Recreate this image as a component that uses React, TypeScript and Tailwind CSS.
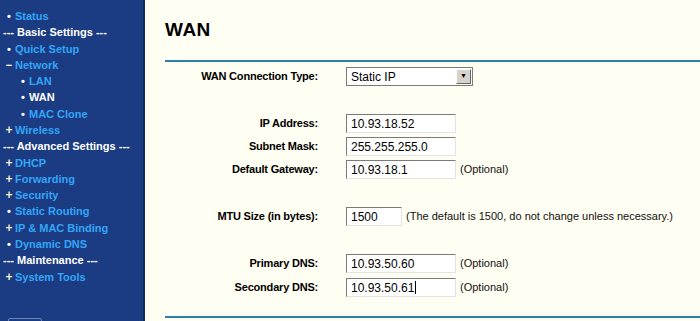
const menu: { text: string; kind: "head" | "item"; mark?: string; level?: number; active?: boolean }[] = [
  { text: "Status", kind: "item", mark: "•" },
  { text: "--- Basic Settings ---", kind: "head" },
  { text: "Quick Setup", kind: "item", mark: "•" },
  { text: "Network", kind: "item", mark: "−" },
  { text: "LAN", kind: "item", mark: "•", level: 1 },
  { text: "WAN", kind: "item", mark: "•", level: 1, active: true },
  { text: "MAC Clone", kind: "item", mark: "•", level: 1 },
  { text: "Wireless", kind: "item", mark: "+" },
  { text: "--- Advanced Settings ---", kind: "head" },
  { text: "DHCP", kind: "item", mark: "+" },
  { text: "Forwarding", kind: "item", mark: "+" },
  { text: "Security", kind: "item", mark: "+" },
  { text: "Static Routing", kind: "item", mark: "•" },
  { text: "IP & MAC Binding", kind: "item", mark: "+" },
  { text: "Dynamic DNS", kind: "item", mark: "•" },
  { text: "--- Maintenance ---", kind: "head" },
  { text: "System Tools", kind: "item", mark: "+" },
];

function Sidebar() {
  return (
    <div className="w-[145px] shrink-0 bg-[#1b3b82] border-r-2 border-[#0f2a66] pt-[8px] font-['Liberation_Sans',Arial,sans-serif] text-[11px] font-bold">
      {menu.map((m) => {
        if (m.kind === "head") {
          return (
            <div key={m.text} className="h-[16.3px] leading-[16.3px] pl-[3px] text-white whitespace-nowrap">
              {m.text}
            </div>
          );
        }
        return (
          <div
            key={m.text}
            className={
              "flex h-[16.3px] items-center whitespace-nowrap " +
              (m.level ? "pl-[18px]" : "pl-[4px]")
            }
          >
            <span
              className={
                "w-[10px] text-center " +
                (m.mark === "+" ? "text-[#f2f0c8] text-[12px]" : "text-white")
              }
            >
              {m.mark}
            </span>
            <span className={m.active ? "pl-[1px] text-white" : "pl-[1px] text-[#33a6f6]"}>{m.text}</span>
          </div>
        );
      })}
      <div className="ml-[8px] mt-[33px] h-[10px] w-[34px] rounded-[2px] border border-[#6f86bb]" />
    </div>
  );
}

function Box({ value, w, cursor }: { value: string; w: number; cursor?: boolean }) {
  return (
    <div
      className={
        "flex h-[19px] items-center border-[1.5px] border-t-[#7b7b7b] border-l-[#7b7b7b] border-b-[#e3e3e3] border-r-[#e3e3e3] bg-white pl-[4px] text-[12px] text-black " +
        (w === 56 ? "w-[56px]" : "w-[110px]")
      }
    >
      {value}
      {cursor && <span className="ml-[1px] inline-block h-[13px] w-px bg-black" />}
    </div>
  );
}

function Row({ label, children }: { label: string; children: React.ReactNode }) {
  return (
    <div className="flex h-[23px] items-center">
      <div className="w-[153px] text-right text-[11px] font-bold tracking-[-0.2px] text-black">{label}</div>
      <div className="ml-[28px] flex items-center gap-[4px] text-[11px] text-[#111]">{children}</div>
    </div>
  );
}

function Spacer() {
  return <div className="h-[24px]" />;
}

export default function App() {
  return (
    <div className="flex h-[321px] w-[700px] overflow-hidden bg-[#fffef2] font-['Liberation_Sans',Arial,sans-serif]">
      <Sidebar />
      <div className="flex-1 pl-[20px]">
        <div className="flex h-[60px] items-center">
          <h1 className="text-[19px] font-bold tracking-[0.5px] text-black">WAN</h1>
        </div>
        <div className="h-[2px] bg-[#2b80ae]" />
        <div className="h-[3px]" />
        <Row label="WAN Connection Type:">
          <div className="flex h-[19px] w-[127px] items-center justify-between border border-[#7b7b7b] bg-white pl-[4px] text-[12px] text-black">
            <span>Static IP</span>
            <span className="mr-[1px] flex h-[15px] w-[15px] items-center justify-center border border-t-white border-l-white border-b-[#666] border-r-[#666] bg-[#d6d3cb] text-[7px] text-black">
              ▼
            </span>
          </div>
        </Row>
        <Spacer />
        <Row label="IP Address:">
          <Box value="10.93.18.52" w={110} />
        </Row>
        <Row label="Subnet Mask:">
          <Box value="255.255.255.0" w={110} />
        </Row>
        <Row label="Default Gateway:">
          <Box value="10.93.18.1" w={110} />
          <span>(Optional)</span>
        </Row>
        <Spacer />
        <Row label="MTU Size (in bytes):">
          <Box value="1500" w={56} />
          <span>(The default is 1500, do not change unless necessary.)</span>
        </Row>
        <Spacer />
        <Row label="Primary DNS:">
          <Box value="10.93.50.60" w={110} />
          <span>(Optional)</span>
        </Row>
        <div className="h-[1px]" />
        <Row label="Secondary DNS:">
          <Box value="10.93.50.61" w={110} cursor />
          <span>(Optional)</span>
        </Row>
        <div className="mt-[17px] h-[2px] bg-[#2b80ae]" />
      </div>
    </div>
  );
}
